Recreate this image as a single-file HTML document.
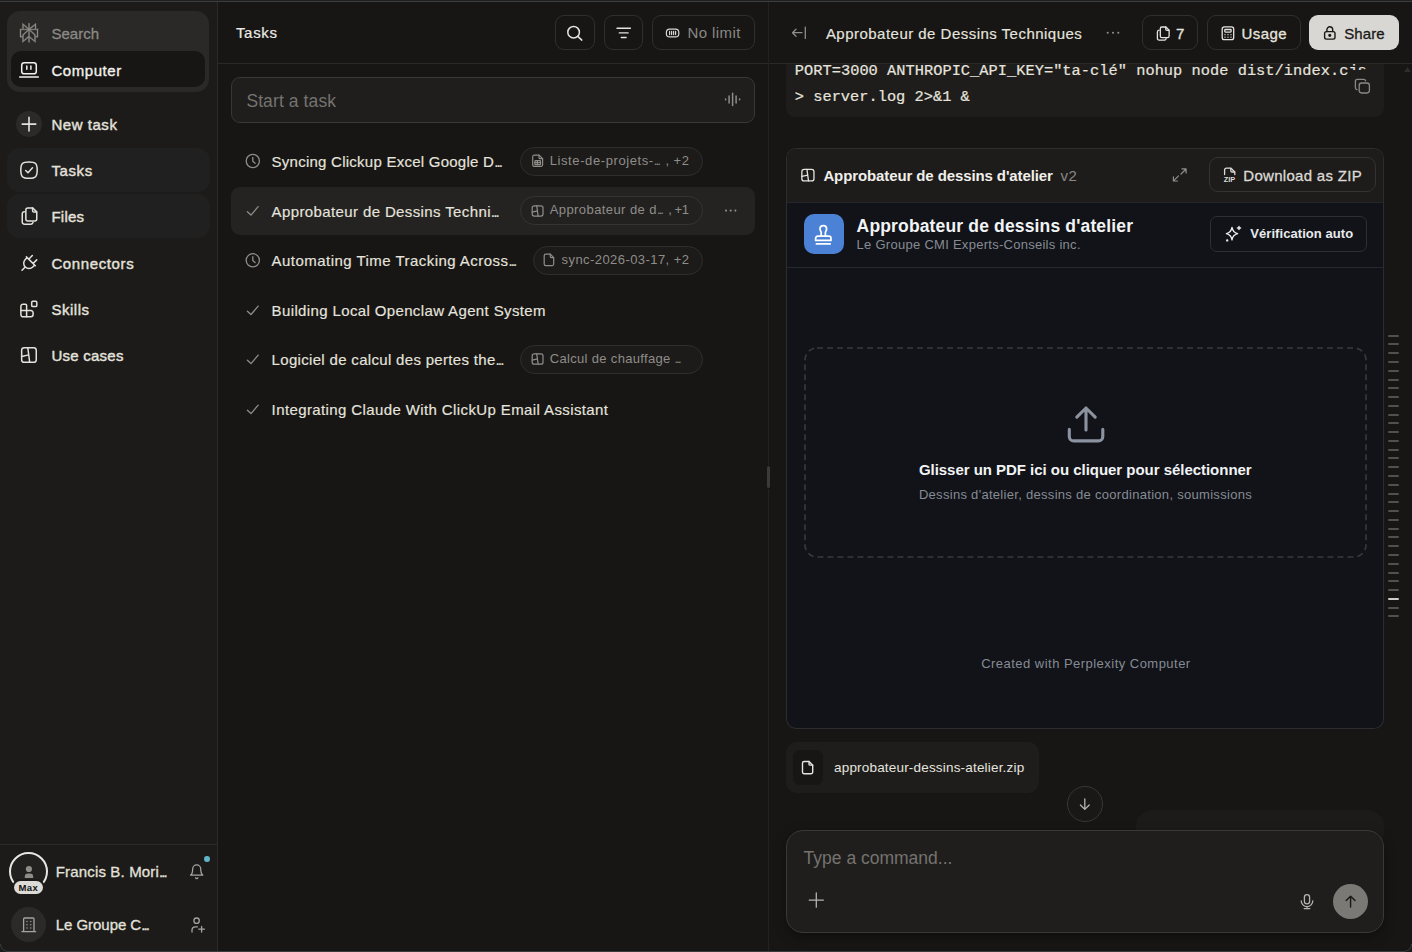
<!DOCTYPE html>
<html lang="en"><head><meta charset="utf-8"><title>Computer</title>
<style>
*{box-sizing:border-box;margin:0;padding:0}
html,body{width:1412px;height:952px;overflow:hidden;background:#171615}
body{font-family:"Liberation Sans",sans-serif;color:#e6e4df;-webkit-font-smoothing:antialiased}
#app{position:relative;width:1412px;height:952px;overflow:hidden;background:#171615}
.a{position:absolute}
.t{position:absolute;line-height:1;white-space:nowrap}
svg{position:absolute;overflow:visible}
.btn{position:absolute;border:1px solid #302f2d;border-radius:9px}
.e{letter-spacing:-1.9px !important;margin-right:1.9px}
.chip{position:absolute;height:29px;border:1px solid #2f2e2c;border-radius:15px;background:#1c1b1a}
</style></head><body><div id="app">
<div class="a" style="left:0px;top:0px;width:217px;height:952px;background:#1c1b1a"></div>
<div class="a" style="left:217px;top:0px;width:1px;height:952px;background:#2b2a28"></div>
<div class="a" style="left:7px;top:11px;width:202px;height:81px;background:#2a2928;border-radius:13px"></div>
<div class="a" style="left:11px;top:51px;width:194px;height:36px;background:#171615;border-radius:10px"></div>
<div class="a" style="left:16px;top:111px;width:26px;height:26px;background:#2b2a29;border-radius:50%"></div>
<div class="a" style="left:7px;top:148px;width:203px;height:44px;background:#212020;border-radius:13px"></div>
<div class="a" style="left:7px;top:194px;width:203px;height:44px;background:#212020;border-radius:13px"></div>
<div class="a" style="left:0px;top:844px;width:217px;height:1px;background:#2b2a28"></div>
<div class="a" style="left:9px;top:852px;width:39px;height:39px;border:2px solid #e8e6e1;border-radius:50%;background:#222120"></div>
<div class="a" style="left:12px;top:879px;width:33px;height:17px;background:#1c1b1a;border-radius:9px"></div>
<div class="a" style="left:13.7px;top:880.6px;width:29.6px;height:13.8px;background:#dddbd6;border-radius:7px"></div>
<div class="a" style="left:204px;top:856.3px;width:5.5px;height:6px;background:#5fb3c4;border-radius:50%"></div>
<div class="a" style="left:11px;top:907px;width:35px;height:35px;background:#2b2a29;border-radius:50%"></div>
<div class="a" style="left:218px;top:63px;width:550px;height:1px;background:#2a2927"></div>
<div class="a" style="left:768px;top:0px;width:1px;height:952px;background:#232221"></div>
<div class="a" style="left:766px;top:465px;width:5px;height:24px;background:#171615;border-radius:2px"></div>
<div class="a" style="left:767px;top:466px;width:3px;height:22px;background:#3b3a38;border-radius:1.5px"></div>
<div class="btn" style="left:555px;top:15px;width:40px;height:35px"></div>
<div class="btn" style="left:604px;top:15px;width:39px;height:35px"></div>
<div class="btn" style="left:652px;top:15px;width:103px;height:35px"></div>
<div class="a" style="left:231px;top:77px;width:524px;height:46px;background:#1f1e1d;border:1px solid #383735;border-radius:9px"></div>
<div class="a" style="left:231px;top:187px;width:524px;height:48px;background:#242322;border-radius:9px"></div>
<div class="chip" style="left:520px;top:147px;width:183px"></div>
<div class="chip" style="left:520px;top:196px;width:183px;background:#222120;border-color:#353432"></div>
<div class="chip" style="left:532.5px;top:246px;width:170.5px"></div>
<div class="chip" style="left:520px;top:345px;width:183px"></div>
<div class="a" style="left:769px;top:63px;width:643px;height:1px;background:#2a2927"></div>
<div class="a" style="left:786px;top:64px;width:598px;height:53px;background:#1e1d1c;border-radius:0 0 9px 9px"></div>
<div class="a" style="left:1346px;top:76px;width:4px;height:5px;background:#1e1d1c;z-index:2"></div>
<div class="a" style="left:1348.5px;top:70px;width:31px;height:34px;background:#1e1d1c;border-radius:5px;z-index:2"></div>
<div class="btn" style="left:1142px;top:15px;width:56px;height:35px"></div>
<div class="btn" style="left:1207px;top:15px;width:94px;height:35px"></div>
<div class="a" style="left:1309px;top:15px;width:90px;height:35px;background:#d9d7d3;border-radius:9px"></div>
<div class="a" style="left:786px;top:148px;width:598px;height:581px;background:#111318;border:1px solid #2b2d31;border-top-color:#2f2e2c;border-radius:10px"></div>
<div class="a" style="left:787px;top:149px;width:596px;height:53px;background:#1d1c1b;border-radius:9px 9px 0 0"></div>
<div class="a" style="left:787px;top:201.5px;width:596px;height:1px;background:#23262c"></div>
<div class="a" style="left:787px;top:267px;width:596px;height:1px;background:#232831"></div>
<div class="btn" style="left:1209px;top:157px;width:167px;height:35px;border-color:#343331"></div>
<div class="a" style="left:804px;top:214px;width:39.5px;height:40px;background:#4b82d6;border-radius:10px"></div>
<div class="a" style="left:1210px;top:216px;width:157px;height:36px;border:1px solid #2a2f38;border-radius:7px"></div>
<svg style="left:804px;top:347px" width="564" height="212" viewBox="0 0 564 212" fill="none"><rect x="1" y="1" width="561" height="209" rx="12" stroke="#353a42" stroke-width="1.6" stroke-dasharray="6 4"/></svg>
<div class="a" style="left:786px;top:742px;width:253px;height:51px;background:#1e1d1c;border-radius:11px"></div>
<div class="a" style="left:793px;top:750px;width:30px;height:35px;background:#171615;border-radius:7px"></div>
<div class="a" style="left:1136px;top:810px;width:248px;height:40px;background:#1c1b1a;border-radius:16px"></div>
<div class="a" style="left:1067px;top:786px;width:36px;height:36px;background:#191817;border:1px solid #383735;border-radius:50%"></div>
<div class="a" style="left:786px;top:830px;width:598px;height:103px;background:#1f1e1d;border:1px solid #3a3937;border-radius:17px;box-shadow:0 4px 12px rgba(0,0,0,.35)"></div>
<div class="a" style="left:1333px;top:884px;width:35px;height:35px;background:#7b7975;border-radius:50%"></div>
<div class="a" style="left:1388px;top:334.65px;width:11px;height:2px;background:#52504d;border-radius:1px"></div>
<div class="a" style="left:1388px;top:343.42px;width:11px;height:2px;background:#52504d;border-radius:1px"></div>
<div class="a" style="left:1388px;top:352.2px;width:11px;height:2px;background:#52504d;border-radius:1px"></div>
<div class="a" style="left:1388px;top:360.97px;width:11px;height:2px;background:#52504d;border-radius:1px"></div>
<div class="a" style="left:1388px;top:369.74px;width:11px;height:2px;background:#52504d;border-radius:1px"></div>
<div class="a" style="left:1388px;top:378.51px;width:11px;height:2px;background:#52504d;border-radius:1px"></div>
<div class="a" style="left:1388px;top:387.29px;width:11px;height:2px;background:#52504d;border-radius:1px"></div>
<div class="a" style="left:1388px;top:396.06px;width:11px;height:2px;background:#52504d;border-radius:1px"></div>
<div class="a" style="left:1388px;top:404.83px;width:11px;height:2px;background:#52504d;border-radius:1px"></div>
<div class="a" style="left:1388px;top:413.61px;width:11px;height:2px;background:#52504d;border-radius:1px"></div>
<div class="a" style="left:1388px;top:422.38px;width:11px;height:2px;background:#52504d;border-radius:1px"></div>
<div class="a" style="left:1388px;top:431.15px;width:11px;height:2px;background:#52504d;border-radius:1px"></div>
<div class="a" style="left:1388px;top:439.93px;width:11px;height:2px;background:#52504d;border-radius:1px"></div>
<div class="a" style="left:1388px;top:448.7px;width:11px;height:2px;background:#52504d;border-radius:1px"></div>
<div class="a" style="left:1388px;top:457.47px;width:11px;height:2px;background:#52504d;border-radius:1px"></div>
<div class="a" style="left:1388px;top:466.25px;width:11px;height:2px;background:#52504d;border-radius:1px"></div>
<div class="a" style="left:1388px;top:475.02px;width:11px;height:2px;background:#52504d;border-radius:1px"></div>
<div class="a" style="left:1388px;top:483.79px;width:11px;height:2px;background:#52504d;border-radius:1px"></div>
<div class="a" style="left:1388px;top:492.56px;width:11px;height:2px;background:#52504d;border-radius:1px"></div>
<div class="a" style="left:1388px;top:501.34px;width:11px;height:2px;background:#52504d;border-radius:1px"></div>
<div class="a" style="left:1388px;top:510.11px;width:11px;height:2px;background:#52504d;border-radius:1px"></div>
<div class="a" style="left:1388px;top:518.88px;width:11px;height:2px;background:#52504d;border-radius:1px"></div>
<div class="a" style="left:1388px;top:527.66px;width:11px;height:2px;background:#52504d;border-radius:1px"></div>
<div class="a" style="left:1388px;top:536.43px;width:11px;height:2px;background:#52504d;border-radius:1px"></div>
<div class="a" style="left:1388px;top:545.2px;width:11px;height:2px;background:#52504d;border-radius:1px"></div>
<div class="a" style="left:1388px;top:553.97px;width:11px;height:2px;background:#52504d;border-radius:1px"></div>
<div class="a" style="left:1388px;top:562.75px;width:11px;height:2px;background:#52504d;border-radius:1px"></div>
<div class="a" style="left:1388px;top:571.52px;width:11px;height:2px;background:#52504d;border-radius:1px"></div>
<div class="a" style="left:1388px;top:580.29px;width:11px;height:2px;background:#52504d;border-radius:1px"></div>
<div class="a" style="left:1388px;top:589.07px;width:11px;height:2px;background:#52504d;border-radius:1px"></div>
<div class="a" style="left:1388px;top:597.84px;width:11px;height:2px;background:#cfcdc8;border-radius:1px"></div>
<div class="a" style="left:1388px;top:606.61px;width:11px;height:2px;background:#52504d;border-radius:1px"></div>
<div class="a" style="left:1388px;top:615.39px;width:11px;height:2px;background:#52504d;border-radius:1px"></div>
<svg style="left:1404px;top:66.5px" width="7" height="5" viewBox="0 0 7 5" fill="#2e2d2c" stroke="none"><path d="M3.5 0L7 5H0z"/></svg>
<div class="a" style="left:0px;top:0px;width:1412px;height:1px;background:#1f2121;z-index:5"></div>
<div class="a" style="left:0px;top:1px;width:1412px;height:1px;background:#3a3c3e;z-index:5"></div>
<div class="a" style="left:7px;top:951px;width:1398px;height:1px;background:#393c3e;z-index:5"></div>
<svg style="left:0;top:944px;z-index:6" width="8" height="8" viewBox="0 0 8 8"><path d="M0 0A8 8 0 0 0 8 8H0z" fill="#1a1c1c"/><path d="M.5 0A7.500 7.500 0 0 0 8 7.500" fill="none" stroke="#393c3e" stroke-width="1"/></svg>
<svg style="left:1404px;top:944px;z-index:6" width="8" height="8" viewBox="0 0 8 8"><path d="M8 0A8 8 0 0 1 0 8H8z" fill="#1a1c1c"/><path d="M7.500 0A7.500 7.500 0 0 1 0 7.500" fill="none" stroke="#393c3e" stroke-width="1"/></svg>
<svg style="left:0;top:0;z-index:3" width="1412" height="952" viewBox="0 0 1412 952" fill="none" stroke-linecap="round" stroke-linejoin="round"><g fill="#8c8a85" stroke="none" stroke-width="1.5" transform="matrix(0.8654 0 0 0.8042 18.615 23.200)"><path vector-effect="non-scaling-stroke" d="M22.3977 7.0896h-2.3106V.0676l-7.5094 6.3542V.1577h-1.1554v6.1966L4.4904 0v7.0896H1.6023v10.3976h2.8882V24l6.932-6.3591v6.2005h1.1554v-6.0469l6.9318 6.1807v-6.4879h2.8882V7.0896zm-3.4657-4.531v4.531h-5.355l5.355-4.531zm-13.2862.0676 4.8691 4.4634H5.6458V2.6262zM2.7576 16.332V8.245h7.8476l-6.1149 6.1147v1.9723H2.7576zm2.8882 5.0404v-6.5285l5.7765-5.7765v6.9997l-5.7765 5.3053zm12.7086.0248-5.7766-5.1509V9.0618l5.7766 5.7766v6.5588zm2.8882-5.0652h-1.733v-1.9723L13.3948 8.245h7.8478v8.087z" stroke="#8c8a85" stroke-width="0.35"/></g>
<g fill="none" stroke="#f3f1ec" stroke-width="1.5"><rect x="21.7" y="62.8" width="14.6" height="11" rx="2.6"/><path d="M26.8 66v3.2M30.9 66v3.2M19.7 77.1h18.6"/></g>
<g fill="none" stroke="#e4e2dd" stroke-width="1.6"><path d="M29 117.3v13.6M22.2 124.1h13.6"/></g>
<g fill="none" stroke="#e4e2dd" stroke-width="1.5"><path d="M29 161.9c6.600 0 8.200 1.600 8.200 8.200s-1.600 8.200-8.200 8.200-8.200-1.600-8.200-8.200 1.600-8.200 8.200-8.200z"/><path d="M25.700 170.500l2.300 2.300 4.500-5"/></g>
<g fill="none" stroke="#e4e2dd" stroke-width="1.5151515151515151" transform="translate(21.5 207.2) scale(0.99)"><path d="M6.400 .750h5l4 4v7.200a2 2 0 0 1-2 2h-7a2 2 0 0 1-2-2v-9.200a2 2 0 0 1 2-2z"/><path d="M11.200 .900v2.600a1.400 1.400 0 0 0 1.400 1.400h2.600"/><path d="M2.900 4.700a2.200 2.200 0 0 0-2.150 2.200v8.100a2.200 2.200 0 0 0 2.200 2.200h6.600a2.200 2.200 0 0 0 2.100-1.800"/></g>
<g fill="none" stroke="#e4e2dd" stroke-width="1.5"><g transform="translate(30.85 261.35) rotate(45)"><path d="M-6.3 0h12.6M-5.3 0v2.6a5.3 5.3 0 0 0 10.6 0v-2.6M-3.1 0v-5.2M3.1 0v-5.2M0 7.9v4.6"/></g></g>
<g fill="none" stroke="#e4e2dd" stroke-width="1.5"><path d="M23.1 304.2h2.3a1.2 1.2 0 0 1 1.2 1.2v5.2h4.3a2.2 2.2 0 0 1 2.2 2.2v1.8a2.2 2.2 0 0 1-2.2 2.2h-7.800a2.200 2.200 0 0 1-2.200-2.200v-8.200a2.200 2.200 0 0 1 2.200-2.200z"/><path d="M20.9 310.6h5.7v6.2"/><rect x="31.7" y="301.3" width="5.1" height="5.2" rx="1.1"/></g>
<g fill="none" stroke="#e4e2dd" stroke-width="1.5"><rect x="21.65" y="347.75" width="14.60" height="14.50" rx="2.60"/><path d="M27.78 347.75L29.68 362.25M21.65 356.60L28.80 354.86"/></g>
<g fill="#8f8d88" stroke="none" stroke-width="1.5"><circle cx="28.9" cy="869" r="3.1"/><path d="M24.8 878v-1.2a3.3 3.3 0 0 1 3.3-3.3h1.8a3.3 3.3 0 0 1 3.3 3.3v1.2z"/></g>
<g fill="none" stroke="#a5a39e" stroke-width="1.3" transform="matrix(0.6722 0 0 0.6800 188.633 863.590)"><path vector-effect="non-scaling-stroke" d="M6 8a6 6 0 0 1 12 0c0 7 3 9 3 9H3s3-2 3-9"/><path vector-effect="non-scaling-stroke" d="M10.3 21a1.94 1.94 0 0 0 3.4 0"/></g>
<g fill="none" stroke="#a5a39e" stroke-width="1.3"><path d="M23.6 931.4v-12.4a1 1 0 0 1 1-1h8.4a1 1 0 0 1 1 1v12.4"/><path d="M21.9 931.6h13.8"/><path d="M27 921.4v.2M30.8 921.4v.2M27 924.6v.2M30.8 924.6v.2M27 927.8v.2M30.8 927.8v.2"/></g>
<g fill="none" stroke="#a5a39e" stroke-width="1.3"><circle cx="196.6" cy="920.7" r="2.7"/><path d="M192 932v-1.8a3.4 3.4 0 0 1 3.4-3.4h2"/><path d="M201.6 926.4v5.6M198.8 929.2h5.6"/></g>
<g fill="none" stroke="#e6e4df" stroke-width="1.5"><circle cx="573.6" cy="32.2" r="5.8"/><path d="M577.8 36.4l4 3.7"/></g>
<g fill="none" stroke="#e6e4df" stroke-width="1.4"><path d="M617 28.2h13.4M619.3 32.9h8.8M621.3 37.5h4.8"/></g>
<g fill="none" stroke="#d8d6d1" stroke-width="1.2"><rect x="666.4" y="29.1" width="12.4" height="7.8" rx="3.2"/><path d="M669.6 31.4v3.2M671.6 31.4v3.2M673.6 31.4v3.2M675.6 31.4v3.2"/></g>
<g fill="none" stroke="#8f8d88" stroke-width="1.5"><path d="M725.6 98.9v.9M729.1 95.9v7M732.6 93.2v12.4M736.1 95.9v7M739.6 98.9v.9"/></g>
<g fill="none" stroke="#8f8d88" stroke-width="1.3"><circle cx="252.8" cy="161.0" r="6.6"/><path d="M252.8 157.4v3.8l2.3 2"/></g>
<g fill="none" stroke="#8f8d88" stroke-width="1.3"><circle cx="252.8" cy="260.3" r="6.6"/><path d="M252.8 256.7v3.8l2.3 2"/></g>
<g fill="none" stroke="#8f8d88" stroke-width="1.3"><path d="M247.4 211.8l3.6 3.3 7.2-8.4"/></g>
<g fill="none" stroke="#8f8d88" stroke-width="1.3"><path d="M247.4 311.2l3.6 3.3 7.2-8.4"/></g>
<g fill="none" stroke="#8f8d88" stroke-width="1.3"><path d="M247.4 360.29999999999995l3.6 3.3 7.2-8.4"/></g>
<g fill="none" stroke="#8f8d88" stroke-width="1.3"><path d="M247.4 410.29999999999995l3.6 3.3 7.2-8.4"/></g>
<g fill="none" stroke="#8f8d88" stroke-width="1.2"><path d="M539.04 155.10H534.30a1.6 1.6 0 0 0-1.6 1.6V164.80a1.6 1.6 0 0 0 1.6 1.6H541.00a1.6 1.6 0 0 0 1.6-1.6V158.66z"/><path d="M539.04 155.10v2.56a1 1 0 0 0 1 1h2.56"/><rect x="534.9" y="160.6" width="5.6" height="4" rx=".6"/><path d="M534.9 162.6h5.6M537.4 160.6v4"/></g>
<g fill="none" stroke="#8f8d88" stroke-width="1.2"><rect x="532.20" y="205.80" width="10.80" height="10.30" rx="2.04"/><path d="M536.74 205.80L538.14 216.10M532.20 212.08L537.49 210.85"/></g>
<g fill="none" stroke="#8f8d88" stroke-width="1.2"><path d="M550.28 254.20H545.80a1.6 1.6 0 0 0-1.6 1.6V264.00a1.6 1.6 0 0 0 1.6 1.6H552.10a1.6 1.6 0 0 0 1.6-1.6V257.62z"/><path d="M550.28 254.20v2.42a1 1 0 0 0 1 1h2.42"/></g>
<g fill="none" stroke="#8f8d88" stroke-width="1.2"><rect x="532.20" y="353.90" width="10.80" height="10.30" rx="2.04"/><path d="M536.74 353.90L538.14 364.20M532.20 360.18L537.49 358.95"/></g>
<g fill="#8f8d88" stroke="none" stroke-width="1.5"><circle cx="726" cy="210.6" r="1.05"/><circle cx="730.7" cy="210.6" r="1.05"/><circle cx="735.4" cy="210.6" r="1.05"/></g>
<g fill="none" stroke="#8f8d88" stroke-width="1.3"><path d="M802 32.7h-9.4M796 29.2l-3.5 3.5 3.5 3.5M805.3 27.2v11.2"/></g>
<g fill="#8f8d88" stroke="none" stroke-width="1.5"><circle cx="1107.7" cy="32.7" r="1.05"/><circle cx="1113" cy="32.7" r="1.05"/><circle cx="1118.3" cy="32.7" r="1.05"/></g>
<g fill="none" stroke="#e6e4df" stroke-width="1.625" transform="translate(1156.8 26.4) scale(0.8)"><path d="M6.400 .750h5l4 4v7.200a2 2 0 0 1-2 2h-7a2 2 0 0 1-2-2v-9.200a2 2 0 0 1 2-2z"/><path d="M11.200 .900v2.600a1.400 1.400 0 0 0 1.400 1.400h2.600"/><path d="M2.900 4.700a2.200 2.200 0 0 0-2.150 2.200v8.100a2.200 2.200 0 0 0 2.200 2.200h6.600a2.200 2.200 0 0 0 2.100-1.800"/></g>
<g fill="none" stroke="#e6e4df" stroke-width="1.3"><rect x="1222.2" y="26.9" width="11.5" height="12.7" rx="2.2"/><rect x="1224.8" y="29.5" width="6.3" height="2.6" rx=".5"/><path d="M1225 34.6v.1M1228 34.6v.1M1231 34.6v.1M1225 37.1v.1M1228 37.1v.1M1231 37.1v.1"/></g>
<g fill="none" stroke="#1a1918" stroke-width="1.4"><rect x="1324.6" y="31.6" width="10.4" height="7.5" rx="1.8"/><path d="M1326.9 31.6v-1.9a2.9 2.9 0 0 1 5.8 0v1.9"/><circle cx="1329.8" cy="35.3" r=".9" fill="#1a1918"/></g>
<g fill="none" stroke="#8a8885" stroke-width="1.3"><rect x="1359.2" y="83" width="10.2" height="10" rx="2.4"/><path d="M1357 89.6h-.2a1.8 1.8 0 0 1-1.4-1.8v-6.4a2 2 0 0 1 2-2h6.4a1.8 1.8 0 0 1 1.8 1.4"/></g>
<g fill="none" stroke="#e6e4df" stroke-width="1.3"><rect x="801.85" y="169.45" width="12.10" height="11.50" rx="2.28"/><path d="M806.93 169.45L808.50 180.95M801.85 176.47L807.78 175.09"/></g>
<g fill="none" stroke="#8f8d88" stroke-width="1.2"><path d="M1182 168.9h4.1v4.1M1186 169l-5 5M1177.5 181h-4.1v-4.1M1173.5 180.9l5-5"/></g>
<g fill="none" stroke="#dcdad5" stroke-width="1.3"><path d="M1224.6 174.6v-4.4a2 2 0 0 1 2-2h4.4l3.8 3.8v2.6"/><path d="M1230.8 168.4v2.4a1.2 1.2 0 0 0 1.2 1.2h2.6"/></g>
<text x="1223.8" y="182.3" font-family="Liberation Sans, sans-serif" font-size="7" font-weight="700" fill="#dcdad5" textLength="11.4" lengthAdjust="spacingAndGlyphs">ZIP</text>
<g fill="none" stroke="#ffffff" stroke-width="1.7"><path d="M821.2 236.2v-3.6c0-1.1-1.2-2-1.2-3.7a3.3 3.3 0 0 1 6.6 0c0 1.7-1.2 2.6-1.2 3.7v3.6"/><path d="M815.6 240.4v-2a2.2 2.2 0 0 1 2.2-2.2h11a2.2 2.2 0 0 1 2.2 2.2v2z"/><path d="M816.4 243.9h13.8"/></g>
<g fill="none" stroke="#e8eaed" stroke-width="1.4"><path d="M1232 227.4c.6 3.6 1.9 5.3 5.6 6.2-3.7.9-5 2.600-5.600 6.200-.6-3.600-1.900-5.300-5.600-6.200 3.700-.900 5-2.600 5.600-6.200z"/><path d="M1239 226.400v3.200M1237.400 228h3.200"/><circle cx="1227.200" cy="240.400" r=".5"/></g>
<g fill="none" stroke="#8b93a1" stroke-width="3.1"><path d="M1086 430V408.200M1076.800 417.200l9.200-9.200 9.200 9.200"/><path d="M1069.300 429.400v7.100a4.400 4.400 0 0 0 4.400 4.400h24.700a4.400 4.400 0 0 0 4.400-4.400v-7.100"/></g>
<g fill="none" stroke="#e6e4df" stroke-width="1.4"><path d="M809.03 761.50H804.10a1.6 1.6 0 0 0-1.6 1.6V772.10a1.6 1.6 0 0 0 1.6 1.6H811.10a1.6 1.6 0 0 0 1.6-1.6V765.17z"/><path d="M809.03 761.50v2.67a1 1 0 0 0 1 1h2.67"/></g>
<g fill="none" stroke="#b5b3ae" stroke-width="1.3"><path d="M1084.800 798.800v10.400M1080.400 805l4.400 4.400 4.400-4.400"/></g>
<g fill="none" stroke="#b5b3ae" stroke-width="1.3"><path d="M816.300 893v14.200M809.200 900.100h14.200"/></g>
<g fill="none" stroke="#b5b3ae" stroke-width="1.3"><rect x="1304.400" y="894.600" width="5.200" height="9.200" rx="2.600"/><path d="M1301.200 900.800a5.800 5.800 0 0 0 11.600 0M1307 906.600v2M1304.200 908.600h5.600"/></g>
<g fill="none" stroke="#1a1918" stroke-width="1.4"><path d="M1350.600 907v-10.600M1346.200 900.600l4.400-4.400 4.400 4.400"/></g></svg>
<span class="t" id="s_search" style="left:51.40px;top:26.00px;font-size:15px;color:#8c8a85;font-weight:400;letter-spacing:0.034px;-webkit-text-stroke:0.3px #8c8a85;">Search</span>
<span class="t" id="s_comp" style="left:51.40px;top:63.00px;font-size:15px;color:#f3f1ec;font-weight:400;letter-spacing:0.561px;-webkit-text-stroke:0.35px #f3f1ec;">Computer</span>
<span class="t" id="s_nav0" style="left:51.40px;top:117.00px;font-size:15px;color:#e4e2dd;font-weight:400;letter-spacing:0.545px;-webkit-text-stroke:0.4px #e4e2dd;">New task</span>
<span class="t" id="s_nav1" style="left:51.40px;top:163.00px;font-size:15px;color:#e4e2dd;font-weight:400;letter-spacing:0.611px;-webkit-text-stroke:0.4px #e4e2dd;">Tasks</span>
<span class="t" id="s_nav2" style="left:51.40px;top:209.00px;font-size:15px;color:#e4e2dd;font-weight:400;letter-spacing:0.254px;-webkit-text-stroke:0.4px #e4e2dd;">Files</span>
<span class="t" id="s_nav3" style="left:51.40px;top:256.00px;font-size:15px;color:#e4e2dd;font-weight:400;letter-spacing:0.620px;-webkit-text-stroke:0.4px #e4e2dd;">Connectors</span>
<span class="t" id="s_nav4" style="left:51.40px;top:302.00px;font-size:15px;color:#e4e2dd;font-weight:400;letter-spacing:0.537px;-webkit-text-stroke:0.4px #e4e2dd;">Skills</span>
<span class="t" id="s_nav5" style="left:51.40px;top:348.00px;font-size:15px;color:#e4e2dd;font-weight:400;letter-spacing:0.245px;-webkit-text-stroke:0.4px #e4e2dd;">Use cases</span>
<span class="t" id="s_user" style="left:55.80px;top:864.00px;font-size:15px;color:#e4e2dd;font-weight:400;letter-spacing:0.153px;-webkit-text-stroke:0.3px #e4e2dd;">Francis B. Mori<span class="e">...</span></span>
<span class="t" id="s_org" style="left:55.80px;top:917.00px;font-size:15px;color:#e4e2dd;font-weight:400;letter-spacing:-0.050px;-webkit-text-stroke:0.3px #e4e2dd;">Le Groupe C<span class="e">...</span></span>
<span class="t" id="s_max" style="left:18.50px;top:883.00px;font-size:9.5px;color:#111;font-weight:700;letter-spacing:0.356px;">Max</span>
<span class="t" id="p_title" style="left:235.90px;top:25.00px;font-size:15px;color:#eceae5;font-weight:400;letter-spacing:0.711px;-webkit-text-stroke:0.2px #eceae5;">Tasks</span>
<span class="t" id="p_nolimit" style="left:687.40px;top:25.00px;font-size:15px;color:#8a8883;font-weight:400;letter-spacing:0.427px;">No limit</span>
<span class="t" id="p_start" style="left:246.40px;top:93.00px;font-size:17.5px;color:#75736f;font-weight:400;letter-spacing:0.099px;">Start a task</span>
<span class="t" id="p_row0" style="left:271.60px;top:154.00px;font-size:15px;color:#e6e4df;font-weight:400;letter-spacing:0.248px;-webkit-text-stroke:0.15px #e6e4df;">Syncing Clickup Excel Google D<span class="e">...</span></span>
<span class="t" id="p_row1" style="left:271.60px;top:204.00px;font-size:15px;color:#e6e4df;font-weight:400;letter-spacing:0.382px;-webkit-text-stroke:0.15px #e6e4df;">Approbateur de Dessins Techni<span class="e">...</span></span>
<span class="t" id="p_row2" style="left:271.60px;top:253.00px;font-size:15px;color:#e6e4df;font-weight:400;letter-spacing:0.460px;-webkit-text-stroke:0.15px #e6e4df;">Automating Time Tracking Across<span class="e">...</span></span>
<span class="t" id="p_row3" style="left:271.60px;top:303.00px;font-size:15px;color:#e6e4df;font-weight:400;letter-spacing:0.369px;-webkit-text-stroke:0.15px #e6e4df;">Building Local Openclaw Agent System</span>
<span class="t" id="p_row4" style="left:271.60px;top:352.00px;font-size:15px;color:#e6e4df;font-weight:400;letter-spacing:0.319px;-webkit-text-stroke:0.15px #e6e4df;">Logiciel de calcul des pertes the<span class="e">...</span></span>
<span class="t" id="p_row5" style="left:271.60px;top:402.00px;font-size:15px;color:#e6e4df;font-weight:400;letter-spacing:0.390px;-webkit-text-stroke:0.15px #e6e4df;">Integrating Claude With ClickUp Email Assistant</span>
<span class="t" id="c1a" style="left:549.70px;top:154.00px;font-size:13px;color:#8f8d88;font-weight:400;letter-spacing:0.596px;">Liste-de-projets-<span class="e">...</span></span>
<span class="t" id="c1b" style="left:665.40px;top:154.00px;font-size:13px;color:#8f8d88;font-weight:400;letter-spacing:0.484px;">, +2</span>
<span class="t" id="c2a" style="left:549.70px;top:203.00px;font-size:13px;color:#8f8d88;font-weight:400;letter-spacing:0.420px;">Approbateur de d<span class="e">...</span></span>
<span class="t" id="c2b" style="left:668.30px;top:203.00px;font-size:13px;color:#8f8d88;font-weight:400;letter-spacing:-0.486px;">, +1</span>
<span class="t" id="c3a" style="left:561.60px;top:253.00px;font-size:13px;color:#8f8d88;font-weight:400;letter-spacing:0.427px;">sync-2026-03-17, +2</span>
<span class="t" id="c5a" style="left:549.70px;top:352.00px;font-size:13px;color:#8f8d88;font-weight:400;letter-spacing:0.330px;">Calcul de chauffage <span class="e">...</span></span>
<span class="t" id="code1" style="left:794.80px;top:64.00px;font-size:15.33px;color:#e6e4df;font-weight:400;letter-spacing:0.028px;font-family:'Liberation Mono',monospace;-webkit-text-stroke:0.2px #e6e4df;">PORT=3000 ANTHROPIC_API_KEY="ta-clé" nohup node dist/index.cjs</span>
<span class="t" id="code2" style="left:794.80px;top:90.00px;font-size:15.33px;color:#e6e4df;font-weight:400;letter-spacing:0.013px;font-family:'Liberation Mono',monospace;-webkit-text-stroke:0.2px #e6e4df;">&gt; server.log 2&gt;&amp;1 &amp;</span>
<span class="t" id="h_title" style="left:825.90px;top:26.00px;font-size:15px;color:#e6e4df;font-weight:400;letter-spacing:0.474px;-webkit-text-stroke:0.15px #e6e4df;">Approbateur de Dessins Techniques</span>
<span class="t" id="h_7" style="left:1176.00px;top:26.00px;font-size:15px;color:#e6e4df;font-weight:400;letter-spacing:0.053px;-webkit-text-stroke:0.3px #e6e4df;">7</span>
<span class="t" id="h_usage" style="left:1241.60px;top:26.00px;font-size:15px;color:#e6e4df;font-weight:400;letter-spacing:0.407px;-webkit-text-stroke:0.3px #e6e4df;">Usage</span>
<span class="t" id="h_share" style="left:1344.20px;top:26.00px;font-size:15px;color:#1a1918;font-weight:400;letter-spacing:0.093px;-webkit-text-stroke:0.3px #1a1918;">Share</span>
<span class="t" id="k_title" style="left:823.40px;top:168.00px;font-size:15px;color:#f1efea;font-weight:700;letter-spacing:-0.106px;">Approbateur de dessins d'atelier</span>
<span class="t" id="k_v2" style="left:1060.40px;top:168.00px;font-size:15px;color:#8a8883;font-weight:400;letter-spacing:0.543px;">v2</span>
<span class="t" id="k_dl" style="left:1243.30px;top:168.00px;font-size:15px;color:#dcdad5;font-weight:400;letter-spacing:0.298px;-webkit-text-stroke:0.3px #dcdad5;">Download as ZIP</span>
<span class="t" id="a_title" style="left:856.60px;top:218.00px;font-size:17.5px;color:#f1f3f5;font-weight:700;letter-spacing:0.155px;">Approbateur de dessins d'atelier</span>
<span class="t" id="a_sub" style="left:856.60px;top:238.00px;font-size:13px;color:#868b94;font-weight:400;letter-spacing:0.274px;">Le Groupe CMI Experts-Conseils inc.</span>
<span class="t" id="a_verif" style="left:1250.30px;top:227.00px;font-size:13px;color:#e8eaed;font-weight:700;letter-spacing:0.059px;">Vérification auto</span>
<span class="t" id="d_main" style="left:918.90px;top:462.00px;font-size:15px;color:#f1f3f5;font-weight:700;letter-spacing:-0.032px;">Glisser un PDF ici ou cliquer pour sélectionner</span>
<span class="t" id="d_sub" style="left:918.90px;top:488.00px;font-size:13px;color:#868b94;font-weight:400;letter-spacing:0.296px;">Dessins d'atelier, dessins de coordination, soumissions</span>
<span class="t" id="d_foot" style="left:981.20px;top:657.00px;font-size:13px;color:#868b94;font-weight:400;letter-spacing:0.472px;">Created with Perplexity Computer</span>
<span class="t" id="f_name" style="left:834.00px;top:761.00px;font-size:13.5px;color:#e6e4df;font-weight:400;letter-spacing:0.186px;">approbateur-dessins-atelier.zip</span>
<span class="t" id="cmd" style="left:803.60px;top:850.00px;font-size:17.5px;color:#75736f;font-weight:400;letter-spacing:-0.002px;">Type a command...</span>
</div></body></html>
